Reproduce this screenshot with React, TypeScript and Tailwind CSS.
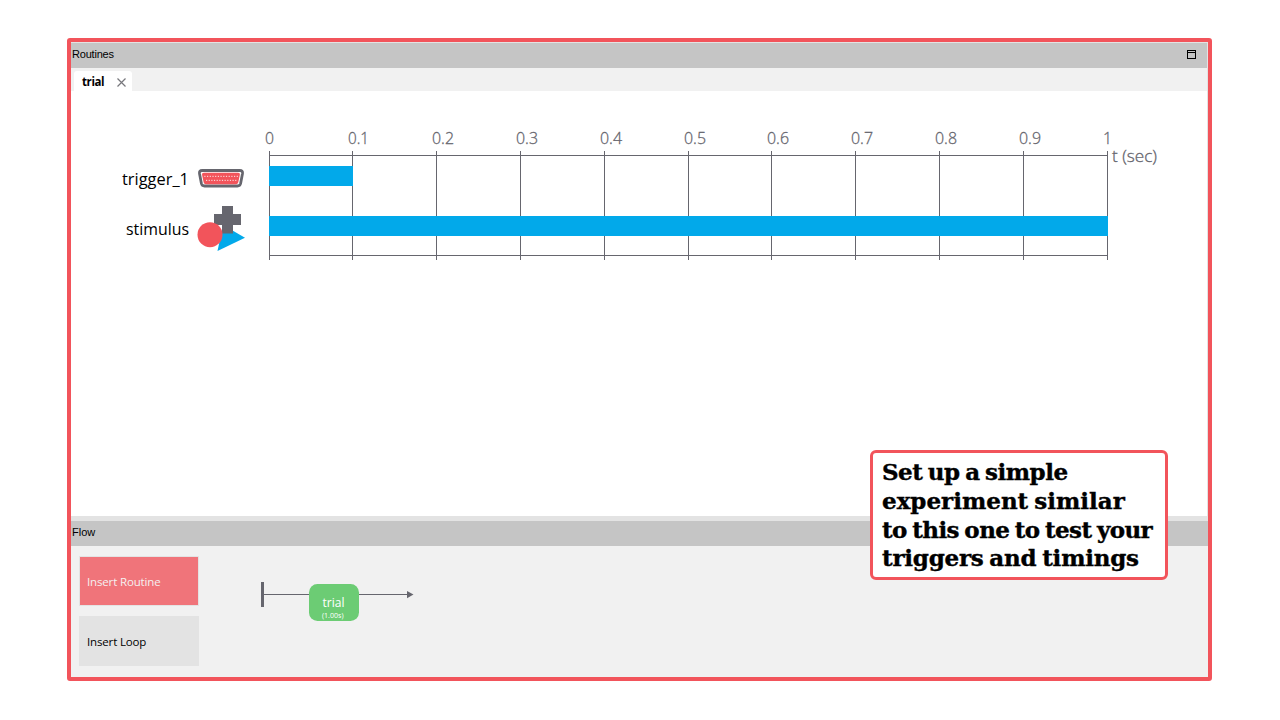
const ticks = [
  { x: 269.5, label: "0", lx: 265, w: 9 },
  { x: 352.5, label: "0.1", lx: 348, w: 21 },
  { x: 436.5, label: "0.2", lx: 432, w: 22 },
  { x: 520.5, label: "0.3", lx: 516, w: 22 },
  { x: 604.5, label: "0.4", lx: 600, w: 22 },
  { x: 688.5, label: "0.5", lx: 684, w: 22 },
  { x: 771.5, label: "0.6", lx: 767, w: 22 },
  { x: 855.5, label: "0.7", lx: 851, w: 22 },
  { x: 939.5, label: "0.8", lx: 935, w: 22 },
  { x: 1023.5, label: "0.9", lx: 1019, w: 22 },
  { x: 1107.5, label: "1", lx: 1103, w: 9 },
];

const pinsTop = [0, 1, 2, 3, 4, 5, 6, 7, 8, 9, 10, 11, 12];
const pinsBottom = [0, 1, 2, 3, 4, 5, 6, 7, 8, 9, 10, 11];

function Timeline() {
  return (
    <svg
      className="block h-[425px] w-[1137px] font-['Open_Sans','Noto_Sans',sans-serif]"
      viewBox="71 91 1137 425"
    >
      <g stroke="#66666e" strokeWidth="1" shapeRendering="crispEdges">
        <path d="M269 155.5H1108M269 255.5H1108" />
        {ticks.map((t) => (
          <path key={t.label} d={`M${t.x} 151V260`} />
        ))}
      </g>
      <g fill="#66666e" stroke="#66666e" strokeWidth="0.3" fontSize="16" fontWeight="360">
        {ticks.map((t) => (
          <text key={t.label} x={t.lx} y="144" textLength={t.w} lengthAdjust="spacingAndGlyphs">
            {t.label}
          </text>
        ))}
        <text x="1112" y="162" textLength="45" lengthAdjust="spacingAndGlyphs">t (sec)</text>
      </g>
      <rect x="269" y="166" width="84" height="20" fill="#02a9ea" />
      <rect x="269" y="216" width="839" height="20" fill="#02a9ea" />
      <g fill="#000" fontSize="16.5" fontWeight="400">
        <text x="122" y="185" textLength="67" lengthAdjust="spacingAndGlyphs">trigger_1</text>
        <text x="126" y="235" textLength="63" lengthAdjust="spacingAndGlyphs">stimulus</text>
      </g>
      <path
        d="M202.2 170.5H239.8Q243 170.5 242.5 173.5L240.6 183.5Q240 186 237.5 186H204.5Q202 186 201.4 183.5L199.5 173.5Q199 170.5 202.2 170.5Z"
        fill="#fff"
        stroke="#66666e"
        strokeWidth="2.8"
      />
      <path
        d="M204 172.8H238Q240.3 172.8 239.8 175L238.3 182.2Q237.8 184.2 236 184.2H206Q204 184.2 203.6 182.2L202.1 175Q201.7 172.8 204 172.8Z"
        fill="#f2545b"
      />
      <g fill="#fbd0d2">
        {pinsTop.map((i) => (
          <rect key={i} x={204.3 + i * 2.7} y="175.8" width="1.2" height="1.2" />
        ))}
        {pinsBottom.map((i) => (
          <rect key={i} x={206 + i * 2.65} y="179.8" width="1.2" height="1.2" />
        ))}
      </g>
      <path d="M223 225L245 237.7L217.5 251Z" fill="#02a9ea" />
      <path d="M222 206H233V214H241V225H233V233.5H222V225H214V214H222Z" fill="#66666e" />
      <circle cx="210" cy="234.7" r="12.5" fill="#f2545b" />
    </svg>
  );
}

function FlowDiagram() {
  return (
    <svg
      className="mt-[30px] ml-[51px] block h-[60px] w-[180px] font-['Open_Sans','Noto_Sans',sans-serif]"
      viewBox="250 576 180 60"
    >
      <path d="M262.5 582V607" stroke="#66666e" strokeWidth="3" />
      <path d="M263 594.5H408" stroke="#66666e" />
      <path d="M407 591L413.5 594.5L407 598.2Z" fill="#66666e" />
      <rect x="309" y="584" width="50" height="37" rx="8.5" fill="#6ccc74" />
      <text x="322.5" y="607" fontSize="12.5" fill="#fff" textLength="22" lengthAdjust="spacingAndGlyphs">trial</text>
      <text x="322" y="618" fontSize="7" fill="#fff" textLength="21.5" lengthAdjust="spacingAndGlyphs">(1.00s)</text>
    </svg>
  );
}

export default function App() {
  return (
    <main className="h-[720px] w-[1280px] overflow-hidden bg-white pt-[38px] pl-[67px] text-black">
      <div className="relative flex h-[643px] w-[1145px] flex-col rounded-[3px] border-4 border-[#f2545b] bg-white">
        <section className="flex flex-col">
          <header className="flex h-[26px] items-center justify-between border-t border-r border-[#e3e3e3] bg-[#c5c5c5] pr-[11px] pb-0.5 pl-px font-['Liberation_Sans',sans-serif] text-[11px]">
            <span className="leading-none tracking-[-0.2px]">Routines</span>
            <svg className="h-[9px] w-[9px]" viewBox="0 0 9 9" shapeRendering="crispEdges">
              <path d="M.5.5H8.5V8.5H.5ZM0 2.5H9" fill="none" stroke="#000" />
            </svg>
          </header>
          <div className="flex h-[23px] items-end border-r border-[#e3e3e3] bg-[#f1f1f1] pl-[3px]">
            <div className="flex h-5 w-[58px] items-center justify-between rounded-t-[3px] bg-white pr-1.5 pl-2">
              <span className="pt-px font-['Open_Sans','Noto_Sans',sans-serif] text-[11.5px] leading-none font-bold tracking-[-0.4px]">trial</span>
              <svg className="mt-[3px] h-[9px] w-[9px]" viewBox="0 0 9 9">
                <path d="M.5.5L8.5 8.5M8.5.5L.5 8.5" stroke="#77777c" strokeWidth="1.2" />
              </svg>
            </div>
          </div>
          <div className="h-[425px] border-r border-[#e3e3e3]">
            <Timeline />
          </div>
        </section>
        <section className="flex flex-1 flex-col border-t-[5px] border-[#e3e3e3] bg-[#f1f1f1]">
          <header className="flex h-[25px] items-center bg-[#c5c5c5] pb-[3px] pl-px font-['Liberation_Sans',sans-serif] text-[11px] leading-none">
            Flow
          </header>
          <div className="flex font-['Open_Sans','Noto_Sans',sans-serif] text-[11.5px]">
            <div className="flex flex-col gap-2.5 pt-2.5 pl-2">
              <button className="flex h-[50px] w-[120px] items-center border border-[#e3e3e3] bg-[#f0747a] pt-0.5 pl-[7px] text-[#f5f0f0]">
                <span className="tracking-[-0.15px]">Insert Routine</span>
              </button>
              <button className="flex h-[50px] w-[120px] items-center bg-[#e3e3e3] pt-0.5 pl-2">
                <span className="tracking-[-0.15px]">Insert Loop</span>
              </button>
            </div>
            <FlowDiagram />
          </div>
        </section>
        <aside className="absolute top-[408px] left-[799px] flex h-[130px] w-[298px] flex-col rounded-md border-[3px] border-[#f2545b] bg-white pt-[5px] pl-[9px] font-['DejaVu_Serif',serif] text-[23px] leading-[28.8px] font-bold whitespace-nowrap [-webkit-text-stroke:0.4px_#000] [word-spacing:-2px]">
          <span className="tracking-[-0.5px]">Set up a simple</span>
          <span className="tracking-[0px]">experiment similar</span>
          <span className="tracking-[-0.58px]">to this one to test your</span>
          <span className="tracking-[-0.22px]">triggers and timings</span>
        </aside>
      </div>
    </main>
  );
}
